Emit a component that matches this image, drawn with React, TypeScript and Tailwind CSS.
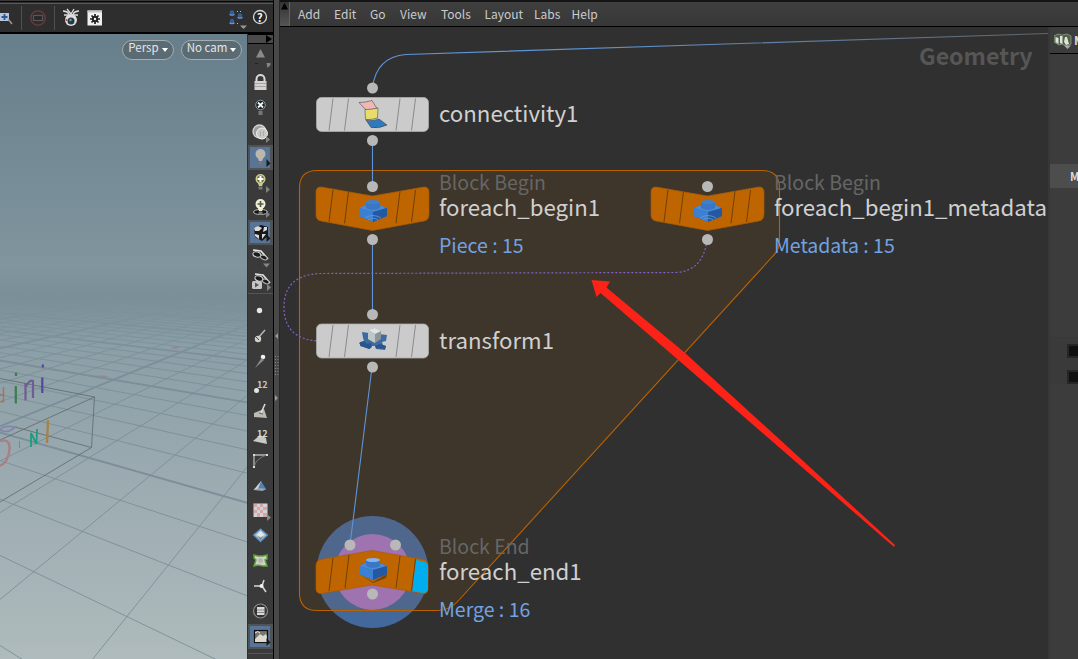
import React from "react";

const X0 = 0.438, X1 = 0.2445, X2 = -0.192;
const W0 = 0.00493, W1 = -0.000392, W2 = -0.00046;
const HORIZON = 221;

function project(i: number, j: number): [number, number] {
  const w = W0 + W1 * i + W2 * j;
  return [(X0 + X1 * i + X2 * j) / w, HORIZON + 1 / w];
}

function gridLines() {
  const lines: { d: string; thick: boolean }[] = [];
  for (let k = -110; k <= 8; k++) {
    const jEnd = (W0 + W1 * k - 0.0017) / -W2;
    const a = project(k, -110);
    const b = project(k, jEnd);
    lines.push({ d: `M${a[0]} ${a[1]}L${b[0]} ${b[1]}`, thick: (k + 102) % 5 === 0 });
    const iEnd = (W0 + W2 * k - 0.0017) / -W1;
    const c = project(-110, k);
    const e = project(iEnd, k);
    lines.push({ d: `M${c[0]} ${c[1]}L${e[0]} ${e[1]}`, thick: (k + 110) % 5 === 0 });
  }
  return lines;
}

function Scene() {
  return (
    <svg className="block" width="247" height="625" viewBox="0 0 247 625">
      <defs>
        <linearGradient id="sky" x1="0" y1="0" x2="0" y2="1">
          <stop offset="0" stopColor="#677f8b" />
          <stop offset="0.37" stopColor="#80959e" />
          <stop offset="0.42" stopColor="#7b9099" />
          <stop offset="0.5" stopColor="#8b9fa6" />
          <stop offset="0.7" stopColor="#9aaab0" />
          <stop offset="1" stopColor="#afbbbc" />
        </linearGradient>
        <linearGradient id="fog" gradientUnits="userSpaceOnUse" x1="0" y1="244" x2="0" y2="330">
          <stop offset="0" stopColor="#000" />
          <stop offset="0.4" stopColor="#888" />
          <stop offset="1" stopColor="#fff" />
        </linearGradient>
        <mask id="fade" maskUnits="userSpaceOnUse" x="0" y="0" width="247" height="625">
          <rect width="247" height="625" fill="url(#fog)" />
        </mask>
      </defs>
      <rect width="247" height="625" fill="url(#sky)" />
      <g mask="url(#fade)" stroke="#7b8e99" fill="none">
        {gridLines().map((l, n) => (
          <path key={n} d={l.d} strokeWidth={l.thick ? 1.9 : 0.9} />
        ))}
      </g>
      <g fill="#93898f">
        <path d="M95 341.500h10l5 2h-10z" />
        <path d="M170 313.500l7-1.500 4 1-6 2z" />
        <path d="M217 293h8v1h-7z" />
      </g>
      <g stroke="#656f73" strokeWidth="0.9" fill="none">
        <path d="M0 344.500L94.500 363 91.500 413.500 0 468" />
        <path d="M94.500 363L0 406M15 393L91.500 413.500" />
      </g>
      <g fill="none">
        <path d="M3.500 353V368.500M3.500 360L0 361.500M3.500 367L0 368" stroke="#a3765c" strokeWidth="1.500" />
        <path d="M15.800 352V369.500M16 338.500v3.500" stroke="#3f7c52" strokeWidth="2.300" />
        <path d="M25.500 366.500V349M25.500 353Q30 345 33 347V364" stroke="#705d92" strokeWidth="2.200" />
        <path d="M42.300 343.500V359M42.800 330.500v3" stroke="#5346a0" strokeWidth="2.200" />
        <path d="M48 386L47 409" stroke="#a48245" strokeWidth="2.300" />
        <path d="M31 413V399L36.500 410 37 395" stroke="#1f9b7d" strokeWidth="1.800" />
        <path d="M19.500 407v7" stroke="#7b858d" strokeWidth="1" />
        <path d="M0 407C7 405 10 408 9.500 415C9 424 5 430 0 431.500" stroke="#aa7e84" strokeWidth="2.400" />
        <path d="M0 396Q4 391 15 393 8 400 0 396" stroke="#8487a5" strokeWidth="1.800" />
      </g>
    </svg>
  );
}

const corner = <path d="M18 16v7l4-3.500z" fill="#828282" />;
const darkCorner = <path d="M18.500 14v8l4-3.500z" fill="#161a20" />;
const bulb = (c: string) => (
  <g>
    <circle cx="12.500" cy="9" r="5" fill={c} />
    <path d="M9 11l2 5h3l2-5z" fill={c} />
    <path d="M10.500 16.500h4v3h-4z" fill="#777" />
  </g>
);
const eye = (
  <g>
    <path d="M5 5l8 1 7 8" stroke="#e2e2e2" strokeWidth="1.600" fill="none" />
    <ellipse cx="9" cy="9.500" rx="4" ry="2.500" fill="#1b1b1b" stroke="#ccc" strokeWidth="1" transform="rotate(15 9 9)" />
    <ellipse cx="16" cy="12.500" rx="3.500" ry="2" fill="#1b1b1b" stroke="#bbb" strokeWidth="1" transform="rotate(25 16 12)" />
  </g>
);

const tools: { active?: boolean; gap?: boolean; art: React.ReactNode }[] = [
  { art: <g><path d="M8 12.500h9L12.500 4z" fill="#8a8a8a" /><path d="M18.500 18h4v2l-3 3z" fill="#858585" /><path d="M7 18.500h3" stroke="#222" /></g> },
  { art: <g><path d="M8.500 12V9a4 4 0 018 0v3" stroke="#d9d9d9" strokeWidth="2" fill="none" /><rect x="6.500" y="11" width="12" height="9" fill="#d5d3cf" /><path d="M7 13.500h11M7 16.500h11" stroke="#a7a59f" /></g> },
  { art: <g><circle cx="12.500" cy="10" r="4.800" fill="#172024" stroke="#929c9d" /><path d="M10 7.500l5 5m0-5l-5 5" stroke="#f3f3f3" strokeWidth="1.800" /><path d="M10.500 16h4v4h-4z" fill="#747878" /></g> },
  { art: <g><circle cx="11.500" cy="11.500" r="6.500" fill="#9b9f9c" stroke="#d3d5d1" strokeWidth="1.300" /><circle cx="14" cy="13.500" r="5.500" fill="#c8c9c5" stroke="#f3f3f3" /><path d="M12.500 11v5m3-5v5" stroke="#aaa" />{corner}</g> },
  { active: true, art: <g>{bulb("#b9b7ae")}{darkCorner}</g> },
  { art: <g>{bulb("#cbcb8f")}<circle cx="12.500" cy="9" r="3.500" fill="#6d6c42" /><path d="M9.500 9h6m-3-3v6" stroke="#fff" strokeWidth="2" />{corner}</g> },
  { art: <g><ellipse cx="12.500" cy="17" rx="7" ry="2.500" fill="#111" stroke="#bbb" />{bulb("#eef0d0")}<path d="M9.500 9h6m-3-3v6" stroke="#555" strokeWidth="1.600" />{corner}</g> },
  { active: true, art: <g><path d="M6 8l7-3 7 2v9l-6 5-7-4z" fill="#181818" /><path d="M6 8l4-2 4 2-3 3-4 0zM15 12l4-2v-3l-3 0zM7 14l4 1v4l-4-3zM14 14l4 0-4 5z" fill="#d9d9d9" />{darkCorner}</g> },
  { art: <g>{eye}<path d="M15 18.500h7l-3.500 4z" fill="#858585" /></g> },
  { gap: true, art: <g transform="translate(0 -1)"><g transform="translate(2 0)">{eye}</g><rect x="4" y="12" width="10" height="8" rx="1.500" fill="#c7c6c3" /><path d="M7 13.500l4 2.500-4 2.500z" fill="#555" /><path d="M19 15v7l4-3.500z" fill="#858585" /></g> },
  { art: <circle cx="11.500" cy="11.500" r="2.700" fill="#e7e7e3" /> },
  { art: <g><path d="M10 14l7-8" stroke="#b8b8b8" strokeWidth="1.500" /><circle cx="10" cy="15" r="3.200" fill="#d0cfca" /><path d="M7 12l4 4" stroke="#444" /></g> },
  { art: <g><circle cx="15" cy="8" r="2.300" fill="#f0efeb" /><path d="M13.500 9L7 19l9-8z" fill="#8c8c87" /></g> },
  { art: <g><circle cx="8.500" cy="16.500" r="2.500" fill="#e6e5df" /><text x="9" y="13.500" className="text-[9px] font-bold" fill="#c8c8c8">12</text></g> },
  { art: <g><path d="M6 14l10-4 3 9-13-1z" fill="#bbbab5" /><path d="M13 14l4-9" stroke="#e0e0de" strokeWidth="1.500" /><path d="M11 14l4 1" stroke="#666" /></g> },
  { art: <g><path d="M5 17l7-6 6 3 1 6z" fill="#c9c8c4" /><text x="9" y="12.500" className="text-[9px] font-bold" fill="#d8d8d8">12</text></g> },
  { art: <g fill="none"><path d="M6 18V6h13" stroke="#aeb7ac" strokeWidth="1.300" /><path d="M6 18Q8 9 19 6" stroke="#777" /><path d="M5 5h2v2H5zM5 17h2v2H5zM18 5h2v2h-2z" fill="#d7ddd5" /></g> },
  { art: <g><path d="M5.500 16L13 7l2 8z" fill="#d2d0cb" /><path d="M13 7l5 8-4 1-4-1z" fill="#4d83bd" /><path d="M5.500 16l9 1 4-2-6-1z" fill="#98a5b1" /></g> },
  { art: <g><rect x="5.500" y="4.500" width="14" height="13.500" fill="#cad3de" /><path d="M6 5h3v3H6zM12 5h3v3h-3zM9 8h3v3H9zM15 8h4v3h-4zM6 11h3v3H6zM12 11h3v3h-3zM9 14h3v4H9zM15 14h4v4h-4z" fill="#d7a6a1" /><path d="M19 15v7l4-3.500z" fill="#858585" /></g> },
  { art: <g><path d="M12.500 5l7 6-7 6.500-7-6.500z" fill="#aec0ce" stroke="#568abc" strokeWidth="1.300" /><path d="M12.500 7l4 4-4 2-4-2z" fill="#e8e7dd" /><path d="M12.500 14l3-2-3 4-3-4z" fill="#65798a" /></g> },
  { art: <g><path d="M6 6l4 1h5l4-1 0 4-2 1 2 6-4 0-5-1-4 1 2-6-2-2z" fill="#cfd2c6" stroke="#57a334" strokeWidth="1.500" /><circle cx="12.500" cy="11.500" r="2.500" fill="#b5b4ad" /></g> },
  { art: <g stroke="#d9d8d2" strokeWidth="1.500"><path d="M14 12L16 6M13 12L6 12M14 12l4 6" /><circle cx="13.500" cy="12" r="2" fill="#f3f3f3" stroke="none" /></g> },
  { art: <g><circle cx="12.500" cy="12" r="7" fill="#333" stroke="#8b8b8b" strokeWidth="1.200" /><rect x="9" y="8" width="7.500" height="8" fill="#d9d9d6" /><path d="M9 11h7.500M9 13.500h7.500" stroke="#888" /></g> },
  { active: true, art: <g><rect x="6.500" y="6.500" width="13" height="12" fill="#77776f" stroke="#111" strokeWidth="1.200" /><path d="M7 15l5-5 3 2 3-2 1 3v5H7z" fill="#ddd9cf" /><path d="M7 9q3-3 5 0" stroke="#eee" fill="none" />{darkCorner}</g> },
];

function ToolStrip() {
  return (
    <div className="flex w-[25px] shrink-0 flex-col bg-[#3a3a3a]">
      <div className="mb-px flex h-[10px] items-center justify-end border-y border-black bg-[#4a4a4a] pr-px">
        <svg width="7" height="8"><path d="M1 0v8l6-4z" fill="#000" /></svg>
      </div>
      {tools.map((t, n) => (
        <React.Fragment key={n}>
          <div className={t.active ? "h-[25px] border-2 border-r-[3px] border-[#505356] bg-[#587597]" : "h-[25px]"}>
            <svg className={t.active ? "-ml-0.5 -mt-0.5 overflow-visible" : "overflow-visible"} width="25" height="25">{t.art}</svg>
          </div>
          {t.gap && <div className="mb-[3px] mt-[-2px] h-px bg-[#545454]" />}
          {t.gap && <div className="h-[2px]" />}
        </React.Fragment>
      ))}
      <div className="mt-[4px] h-px bg-[#555]" />
    </div>
  );
}

function LeftToolbar() {
  return (
    <div className="flex h-[34px] items-center border-b-2 border-black bg-[#2e2e2e]">
      <svg width="273" height="32" viewBox="0 0 273 32">
        <rect width="273" height="2" fill="#383838" />
        <path d="M0 1.500h273" stroke="#080808" />
        <path d="M0 3.500h273" stroke="#5a5a5a" />
        <rect x="-3" y="13" width="12" height="8" fill="#b7c7d9" />
        <path d="M4.500 14v6M1.500 17h6" stroke="#2d5794" strokeWidth="1.800" />
        <path d="M8 19l4 5" stroke="#999" strokeWidth="1.500" />
        <path d="M21.500 6v24M54.500 6v24" stroke="#505050" />
        <circle cx="38" cy="18" r="7.200" fill="none" stroke="#703c3c" strokeWidth="1.300" />
        <rect x="33.500" y="15.500" width="9" height="5" fill="#292929" stroke="#5a5656" strokeWidth="1.200" />
        <g stroke="#ddd" fill="none" strokeWidth="1.300">
          <path d="M63 11q4 0 6 3M64 15l6 0M67 9l4 5M79 11q-4 0-6 3M78 15h-6M74 9l-3 5" />
        </g>
        <circle cx="71" cy="20" r="6" fill="#e0dedb" />
        <circle cx="71" cy="21" r="3.500" fill="#24394a" />
        <circle cx="70.500" cy="20" r="1.200" fill="#6a9dae" />
        <circle cx="66.500" cy="20" r="1" fill="#c14032" />
        <rect x="87.500" y="10.500" width="14.500" height="15" fill="#f0f0f0" />
        <rect x="87.500" y="10.500" width="14.500" height="2" fill="#c5c5c5" />
        <g stroke="#222" strokeWidth="1.700"><path d="M95 14v10M90 19h10M91.500 15.500l7 7M98.500 15.500l-7 7" /></g>
        <circle cx="95" cy="19" r="3.200" fill="#222" /><circle cx="95" cy="19" r="1.200" fill="#eee" />
        {[[232, 12.5], [232, 21], [240, 15.5]].map(([x, y]) => (
          <g key={`${x}-${y}`}><ellipse cx={x} cy={y + 2} rx="2.700" ry="1.300" fill="#6da1d0" /><circle cx={x} cy={y} r="2.200" fill="#355d96" /></g>
        ))}
        <path d="M237 11.500h1m2 0h1M237 23.500h1" stroke="#bbb" />
        <path d="M240 25.500h7l-3.500 3.500z" fill="#999" />
        <circle cx="260" cy="17" r="6.500" fill="#25282a" stroke="#d5d7d7" strokeWidth="1.300" />
        <text x="257" y="21.500" className="text-[11px] font-bold" fill="#fff">?</text>
      </svg>
    </div>
  );
}

function ViewPill({ label, className }: { label: string; className: string }) {
  return (
    <div className={`flex h-[20px] items-center justify-center gap-[3px] rounded-full border border-[#a5adb0] bg-[#5b6b73] text-[11.500px] leading-none text-[#e3e6e7] ${className}`}>
      <span className="-mt-[3px]">{label}</span>
      <svg width="6" height="4"><path d="M0 0h6L3 4z" fill="#fff" /></svg>
    </div>
  );
}

function Brick({ x, y, up }: { x: number; y: number; up?: boolean }) {
  return (
    <g transform={`translate(${x} ${y})`}>
      {up && <path d="M-12 6L0 13 14 5 13 9 0 14z" fill="#523716" opacity=".7" />}
      <path d="M-14-3L-7-6H7l7 3V5L0 11-14 5z" fill="#2c66b4" />
      <path d="M-14-3L0 1 14-3 7-6H-7z" fill="#4c8ad6" />
      <path d="M-14-3L0 1v10L-14 5z" fill="#3a80d5" />
      <path d="M0 1l14-4V5L0 11z" fill="#2359a2" />
      <path d="M-7-9v6q7 4 14 0v-6z" fill="#3977c5" />
      <ellipse cx="0" cy="-9" rx="7" ry="2" fill={up ? "#82b4ed" : "#3d7fd0"} />
      {!up && <path d="M-8 7q8-5 16 0M-5 8.500q5-3 10 0" stroke="#6b9bd4" strokeWidth=".8" fill="none" />}
    </g>
  );
}

function Slashes({ x, y, color, bend = 0 }: { x: number; y: number; color: string; bend?: number }) {
  return (
    <g stroke={color} strokeWidth="1">
      <path d={`M${x - 39} ${y + 1 - bend}l-4 32`} />
      <path d={`M${x - 23.5} ${y + 1 - bend / 3}l-4 32`} />
      <path d={`M${x + 28} ${y + 1 - bend / 3}l-4 32`} />
      <path d={`M${x + 43.5} ${y + 1 - bend}l-4 32`} />
    </g>
  );
}

function FlatNode({ y }: { y: number }) {
  return (
    <g>
      <rect x="316.500" y={y} width="112" height="34" rx="5" fill="#cbcbcb" stroke="#a9aca9" strokeWidth=".8" />
      <Slashes x={372} y={y} color="#8b8b8b" />
    </g>
  );
}

function ChevronDown({ x }: { x: number }) {
  return (
    <g>
      <path d={`M${x - 51} 187L${x + 0.5} 196 ${x + 52} 187q5 0 5 5v22q0 6-5 7L${x + 0.5} 230.500 ${x - 51} 221q-5-1-5-6V192q0-5 5-5z`} fill="#bf6500" stroke="#a95a04" strokeWidth=".7" />
      <Slashes x={x} y={191} color="#704009" bend={2} />
      <Brick x={x + 1} y={211} />
    </g>
  );
}

const Dot = ({ x, y }: { x: number; y: number }) => <circle cx={x} cy={y} r="5.500" fill="#b8b8b8" />;

function Graph() {
  return (
    <svg className="block" width="768" height="632" viewBox="280 27 768 632">
      <defs>
        <linearGradient id="wire" gradientUnits="userSpaceOnUse" x1="560" y1="0" x2="1048" y2="0">
          <stop offset="0" stopColor="#5f94d6" />
          <stop offset="1" stopColor="#626568" />
        </linearGradient>
      </defs>
      <circle cx="372.500" cy="572" r="56" fill="#43689c" />
      <circle cx="372.500" cy="572" r="38" fill="#9c75c3" />
      <path d="M317 170.500H762Q779.500 170.500 779.500 188V240Q779.500 250 773 256L459 600Q450 610.500 438 610.500H317Q299.500 610.500 299.500 593V188Q299.500 170.500 317 170.500z" fill="#bf6300" fillOpacity=".1" stroke="#b96200" strokeWidth="1.100" />
      <g fill="none" stroke="#5f94d6" strokeWidth="1.100">
        <path d="M1048 33.500L406 54.500Q376 57 372.500 88" stroke="url(#wire)" />
        <path d="M372.500 141V186M372.500 240V315M372 367L350 545" />
      </g>
      <path d="M707 240Q703 271 676 272.500L320 273.500Q284 275 284 307T318 341" fill="none" stroke="#8762c5" strokeWidth="1.200" strokeDasharray="2 2" />
      <FlatNode y={97.5} />
      <g stroke="#333" strokeWidth=".5">
        <path d="M359 102.500q7 0 13-2l5 8q-6 2-11 1.500z" fill="#efb7b5" />
        <path d="M365 109.500q7 0 13-1.500l-.500 10q-6 2-12 1.500z" fill="#eadc6b" />
        <path d="M366 120q7 1.500 13-1l8 6q-8 4-16 2.500z" fill="#2d7abf" />
      </g>
      <ChevronDown x={372} />
      <ChevronDown x={707} />
      <FlatNode y={324} />
      <path d="M362 332l7 1 3 3 6-2 9 1-1 6-4 1 1 3 3 1-1 4-9-1-1-3-4 0-1 3-10-3 0-4 4-1-1-3z" fill="#3d6aa2" />
      <path d="M359 343l5-2 3 3 4-1 1 4-3 2-8-3zM375 346l5-2 6 2-1 3-9-1z" fill="#28558c" />
      <path d="M368 330l7-2 6 3v8l-6 4-7-4z" fill="#8c9699" />
      <path d="M368 330l7-2 6 3-6 3z" fill="#e0e3e2" />
      <path d="M368 330l7 4v9l-7-4z" fill="#bfc8c9" />
      <path d="M321 559.500L372 550.500 423 559.500q5 1 5 6v22q0 7-5 6L372 585 321 593.500q-5 0-5-5v-23q0-5 5-6z" fill="#bf6500" stroke="#a95a04" strokeWidth=".7" />
      <path d="M416 560l8 1.500q4 1 4 5v22q0 4-5 4.500L412 591z" fill="#00aeef" />
      <g stroke="#704009"><path d="M333 558l-4 33M349 555l-4 33M400 556l-4 32M415.500 559l-4 32" /></g>
      <Brick x={373} y={569} up />
      <Dot x={372.5} y={88} /><Dot x={372.5} y={140.5} />
      <Dot x={372.5} y={186.5} /><Dot x={372.5} y={239.5} />
      <Dot x={707.5} y={186.5} /><Dot x={707.5} y={239.5} />
      <Dot x={372.5} y={314.5} /><Dot x={372.5} y={367} />
      <Dot x={350} y={545} /><Dot x={395.5} y={545} /><Dot x={372.5} y={594} />
    </svg>
  );
}

function NodeLabel({ className, name, kind, info }: { className: string; name: string; kind?: string; info?: string }) {
  return (
    <div className={`absolute whitespace-nowrap leading-none ${className}`}>
      {kind && <div className="h-[23px] text-[19.500px] text-[#666]">{kind}</div>}
      <div className="h-[40px] text-[22.250px] leading-[22px] text-[#d0d0d0]">{name}</div>
      {info && <div className="text-[19.500px] text-[#72a3e0]">{info}</div>}
    </div>
  );
}

function NetworkPane() {
  return (
    <div className="relative h-[632px] w-[768px] overflow-hidden bg-[#303030]">
      <Graph />
      <div className="absolute left-[639px] top-[17px] text-[23.200px] font-bold leading-none text-[#565656]">Geometry</div>
      <NodeLabel className="left-[159px] top-[74px]" name="connectivity1" />
      <NodeLabel className="left-[159px] top-[145px]" kind="Block Begin" name="foreach_begin1" info="Piece : 15" />
      <NodeLabel className="left-[494px] top-[145px]" kind="Block Begin" name="foreach_begin1_metadata" info="Metadata : 15" />
      <NodeLabel className="left-[159px] top-[301px]" name="transform1" />
      <NodeLabel className="left-[159px] top-[509px]" kind="Block End" name="foreach_end1" info="Merge : 16" />
      <svg className="absolute left-0 top-0" width="768" height="632" viewBox="280 27 768 632">
        <path d="M591.500 280L610 281.500 606.500 287.500 684 352 895 545 894 547 676 358 600.500 293 596.500 297z" fill="#fb2217" />
      </svg>
    </div>
  );
}

function MenuBar() {
  const items: [string, string][] = [
    ["Add", "w-[36px]"], ["Edit", "w-[36px]"], ["Go", "w-[30px]"], ["View", "w-[41px]"],
    ["Tools", "w-[43.500px]"], ["Layout", "w-[49.500px]"], ["Labs", "w-[37.500px]"], ["Help", "w-[36px]"],
  ];
  return (
    <div className="flex h-[27px] items-center border-b border-t-2 border-b-black border-t-[#141414] bg-linear-to-b from-[#3f3f3f] to-[#373737] text-[12px] leading-none text-[#cbcbcb]">
      <div className="mr-[8px] flex h-full w-[10px] shrink-0 justify-center border-r border-[#626262] bg-linear-to-b from-[#333] to-[#555] pt-px">
        <svg width="8" height="7"><path d="M0 6.500h7L3.500 0z" fill="#000" /></svg>
      </div>
      {items.map(([t, w]) => <span key={t} className={`shrink-0 ${w}`}>{t}</span>)}
    </div>
  );
}

function ParameterPane() {
  return (
    <div className="flex w-[28px] flex-col overflow-hidden bg-[#3c3c3c]">
      <div className="flex h-[27px] shrink-0 items-center border-b border-black pl-[4px]">
        <svg className="mt-[2px] shrink-0" width="18" height="20" viewBox="0 0 18 20">
          <path d="M0 5l4-2 4 1 5-1 4 2v8l-5 2-4-2-3 1-5-3z" fill="#50604a" stroke="#8ba27e" strokeWidth=".8" />
          <path d="M1.500 6l3 1v6l-3-2zM6 5h2.500v8L6 12zM11 6l2 0 2 7-3 1-2-3z" fill="#dfe3d9" />
          <path d="M10 14.500h7L13.500 18z" fill="#aaa" />
        </svg>
        <span className="ml-[2px] text-[12px] font-bold leading-none text-[#ddd]">M</span>
      </div>
      <div className="mt-[110px] flex h-[24px] shrink-0 items-center bg-[#4d4d4d] pl-[20px] text-[11px] font-bold leading-none text-[#ddd]">M</div>
      <div className="mt-[149px] flex flex-col gap-[12px] border-t border-[#383838] bg-[#3a3a3a] pl-[17px] pt-[6px]">
        <div className="h-[14px] w-[14px] border-2 border-[#262626] bg-[#111]" />
        <div className="h-[14px] w-[14px] border-2 border-[#262626] bg-[#111]" />
      </div>
    </div>
  );
}

export default function App() {
  return (
    <div className="flex h-[659px] w-[1078px] overflow-hidden bg-[#3a3a3a] font-['Noto_Sans_CJK_SC',sans-serif]">
      <div className="flex w-[273px] shrink-0 flex-col">
        <LeftToolbar />
        <div className="flex h-[625px]">
          <div className="relative w-[247px]">
            <Scene />
            <div className="absolute right-[5px] top-[5.500px] flex gap-[7px]">
              <ViewPill label="Persp" className="w-[52px]" />
              <ViewPill label="No cam" className="w-[61px]" />
            </div>
          </div>
          <div className="w-px bg-[#303030]" />
          <ToolStrip />
        </div>
      </div>
      <div className="w-px bg-black" />
      <div className="flex w-[5px] shrink-0 flex-col items-center bg-[#494949] pt-[333px]">
        <svg width="5" height="70" viewBox="0 0 5 70">
          <path d="M4 0v6L1 3zM1 62v6l3-3z" fill="#999" />
          <path d="M1.500 23v20M4 23v20" stroke="#888" strokeDasharray="1 2" />
        </svg>
      </div>
      <div className="w-px bg-[#262626]" />
      <div className="flex min-w-0 flex-1 flex-col">
        <MenuBar />
        <div className="flex flex-1">
          <NetworkPane />
          <div className="w-[2px] bg-[#373737]" />
          <ParameterPane />
        </div>
      </div>
    </div>
  );
}
